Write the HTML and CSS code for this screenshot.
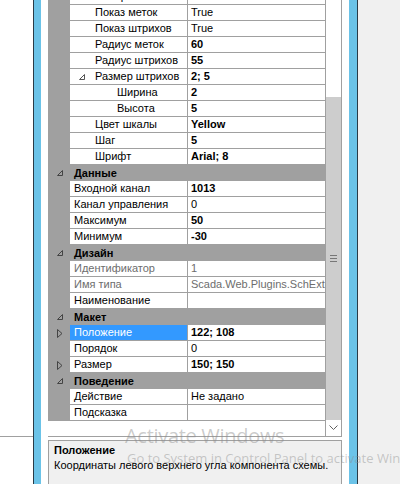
FILE: index.html
```html
<!DOCTYPE html>
<html lang="ru">
<head>
    <meta charset="UTF-8">
    <title>Свойства</title>
    <link rel="stylesheet" href="styles.css">
</head>
<body>
    <div class="backdrop">
        <div class="backdrop-line"></div>
    </div>

    <div class="window">
        <div class="client">
            <div class="grid">
                <div class="rows">
                    <div class="prop-list">
                        <div class="prop">
                            <div class="gutter"></div>
                            <div class="name l2">Поворот меток</div>
                            <div class="value">False</div>
                        </div>
                        <div class="prop">
                            <div class="gutter"></div>
                            <div class="name l2">Показ меток</div>
                            <div class="value">True</div>
                        </div>
                        <div class="prop">
                            <div class="gutter"></div>
                            <div class="name l2">Показ штрихов</div>
                            <div class="value">True</div>
                        </div>
                        <div class="prop">
                            <div class="gutter"></div>
                            <div class="name l2">Радиус меток</div>
                            <div class="value b">60</div>
                        </div>
                        <div class="prop">
                            <div class="gutter"></div>
                            <div class="name l2">Радиус штрихов</div>
                            <div class="value b">55</div>
                        </div>
                        <div class="prop">
                            <div class="gutter"></div>
                            <div class="name l2 has-glyph">
                                <svg class="glyph" width="6" height="6" viewBox="0 0 6 6"><path d="M5.5 0.5V5.5H0.5Z" fill="none" stroke="#555"/></svg>
                                Размер штрихов
                            </div>
                            <div class="value b">2; 5</div>
                        </div>
                        <div class="prop">
                            <div class="gutter"></div>
                            <div class="name l3">Ширина</div>
                            <div class="value b">2</div>
                        </div>
                        <div class="prop">
                            <div class="gutter"></div>
                            <div class="name l3">Высота</div>
                            <div class="value b">5</div>
                        </div>
                        <div class="prop">
                            <div class="gutter"></div>
                            <div class="name l2">Цвет шкалы</div>
                            <div class="value b">Yellow</div>
                        </div>
                        <div class="prop">
                            <div class="gutter"></div>
                            <div class="name l2">Шаг</div>
                            <div class="value b">5</div>
                        </div>
                        <div class="prop">
                            <div class="gutter"></div>
                            <div class="name l2">Шрифт</div>
                            <div class="value b">Arial; 8</div>
                        </div>

                        <div class="cat">
                            <svg class="cat-glyph" width="6" height="6" viewBox="0 0 6 6"><path d="M5.5 0.5V5.5H0.5Z" fill="none" stroke="#444"/></svg>
                            <span>Данные</span>
                        </div>
                        <div class="prop">
                            <div class="gutter"></div>
                            <div class="name">Входной канал</div>
                            <div class="value b">1013</div>
                        </div>
                        <div class="prop">
                            <div class="gutter"></div>
                            <div class="name">Канал управления</div>
                            <div class="value">0</div>
                        </div>
                        <div class="prop">
                            <div class="gutter"></div>
                            <div class="name">Максимум</div>
                            <div class="value b">50</div>
                        </div>
                        <div class="prop">
                            <div class="gutter"></div>
                            <div class="name">Минимум</div>
                            <div class="value b">-30</div>
                        </div>

                        <div class="cat">
                            <svg class="cat-glyph" width="6" height="6" viewBox="0 0 6 6"><path d="M5.5 0.5V5.5H0.5Z" fill="none" stroke="#444"/></svg>
                            <span>Дизайн</span>
                        </div>
                        <div class="prop">
                            <div class="gutter"></div>
                            <div class="name ro">Идентификатор</div>
                            <div class="value ro">1</div>
                        </div>
                        <div class="prop">
                            <div class="gutter"></div>
                            <div class="name ro">Имя типа</div>
                            <div class="value ro">Scada.Web.Plugins.SchExtra.GaugeComponent</div>
                        </div>
                        <div class="prop">
                            <div class="gutter"></div>
                            <div class="name">Наименование</div>
                            <div class="value"></div>
                        </div>

                        <div class="cat">
                            <svg class="cat-glyph" width="6" height="6" viewBox="0 0 6 6"><path d="M5.5 0.5V5.5H0.5Z" fill="none" stroke="#444"/></svg>
                            <span>Макет</span>
                        </div>
                        <div class="prop">
                            <div class="gutter">
                                <svg class="tri" width="6" height="9" viewBox="0 0 6 9"><path d="M0.5 0.5L5 4.5L0.5 8.5Z" fill="none" stroke="#444"/></svg>
                            </div>
                            <div class="name sel">Положение</div>
                            <div class="value b">122; 108</div>
                        </div>
                        <div class="prop">
                            <div class="gutter"></div>
                            <div class="name">Порядок</div>
                            <div class="value">0</div>
                        </div>
                        <div class="prop">
                            <div class="gutter">
                                <svg class="tri" width="6" height="9" viewBox="0 0 6 9"><path d="M0.5 0.5L5 4.5L0.5 8.5Z" fill="none" stroke="#444"/></svg>
                            </div>
                            <div class="name">Размер</div>
                            <div class="value b">150; 150</div>
                        </div>

                        <div class="cat">
                            <svg class="cat-glyph" width="6" height="6" viewBox="0 0 6 6"><path d="M5.5 0.5V5.5H0.5Z" fill="none" stroke="#444"/></svg>
                            <span>Поведение</span>
                        </div>
                        <div class="prop">
                            <div class="gutter"></div>
                            <div class="name">Действие</div>
                            <div class="value">Не задано</div>
                        </div>
                        <div class="prop">
                            <div class="gutter"></div>
                            <div class="name">Подсказка</div>
                            <div class="value"></div>
                        </div>
                    </div>
                </div>

                <div class="scrollbar">
                    <div class="thumb">
                        <span class="grip"></span>
                    </div>
                    <div class="arrow">
                        <svg width="9" height="6" viewBox="0 0 9 6"><path d="M0.5 0.5L4.5 4.5L8.5 0.5" fill="none" stroke="#606060"/></svg>
                    </div>
                </div>
            </div>

            <div class="desc">
                <div class="desc-title">Положение</div>
                <div>Координаты левого верхнего угла компонента схемы.</div>
            </div>
        </div>
    </div>

    <div class="desktop"></div>

    <!-- system watermark drawn over everything -->
    <div class="watermark">
        <div class="wm-title">Activate Windows</div>
        <div class="wm-text">Go to System in Control Panel to activate Windows.</div>
    </div>
</body>
</html>
```

FILE: styles.css
```css
body {
    margin: 0;
    width: 400px;
    height: 484px;
    overflow: hidden;
    position: relative;
    display: flex;
    background: #f0f0f0;
    font-family: "Liberation Sans", Arial, sans-serif;
    font-size: 11px;
    color: #000;
}
.backdrop {
    width: 33px;
    flex: none;
    background: #fff;
    padding-top: 436px;
    box-sizing: border-box;
}
.backdrop-line {
    border-top: 1px solid #a0a0a0;
}
.window {
    width: 325px;
    flex: none;
    box-sizing: border-box;
    display: flex;
    background: #6bc3e8;
    border-left: 1px solid #2a3b47;
    border-right: 1px solid #2a3b47;
    padding: 0 8px 0 7px;
}
.client {
    flex: 1;
    display: flex;
    flex-direction: column;
    background: #fff;
    padding: 0 7px;
    min-width: 0;
}
.desktop {
    flex: 1;
}

/* property grid */
.grid {
    height: 437px;
    flex: none;
    display: flex;
    box-sizing: border-box;
    border-right: 1px solid #a0a0a0;
    border-bottom: 1px solid #a0a0a0;
    overflow: hidden;
}
.rows {
    width: 278px;
    flex: none;
    box-sizing: border-box;
    border-right: 1px solid #a0a0a0;
    overflow: hidden;
    background: #fff;
}
.prop-list {
    margin-top: -11px;
}
.prop {
    display: flex;
    height: 16px;
}
.gutter {
    width: 22px;
    flex: none;
    display: flex;
    align-items: center;
    background: #a0a0a0;
}
.gutter .tri {
    margin-left: 9px;
}
.name {
    width: 117px;
    flex: none;
    box-sizing: border-box;
    display: flex;
    align-items: center;
    padding-left: 4px;
    line-height: 15px;
    white-space: nowrap;
    overflow: hidden;
    border-bottom: 1px solid #a0a0a0;
}
.name.l2 {
    padding-left: 25px;
}
.name.l3 {
    padding-left: 47px;
}
.name.has-glyph {
    padding-left: 9px;
}
.name .glyph {
    margin-right: 10px;
    flex: none;
}
.name.sel {
    background: #3399ff;
    color: #fff;
}
.value {
    flex: 1;
    min-width: 0;
    padding-left: 3px;
    line-height: 15px;
    white-space: nowrap;
    overflow: hidden;
    border-left: 1px solid #a0a0a0;
    border-bottom: 1px solid #a0a0a0;
}
.b {
    font-weight: bold;
}
.ro {
    color: #6d6d6d;
}
.cat {
    display: flex;
    align-items: center;
    height: 16px;
    background: #a0a0a0;
    font-weight: bold;
}
.cat-glyph {
    margin-left: 9px;
    margin-right: 11px;
}

/* vertical scrollbar */
.scrollbar {
    width: 15px;
    flex: none;
    display: flex;
    flex-direction: column;
    background: #fff;
}
.thumb {
    margin-top: 97px;
    height: 323px;
    background: #cdcdcd;
    display: flex;
    align-items: center;
    justify-content: center;
}
.grip {
    width: 7px;
    height: 5px;
    border-top: 1px solid #777;
    border-bottom: 1px solid #777;
    background: linear-gradient(#777, #777) center / 7px 1px no-repeat;
}
.arrow {
    flex: 1;
    display: flex;
    align-items: center;
    justify-content: center;
}

/* help panel */
.desc {
    margin-top: 3px;
    height: 60px;
    flex: none;
    border: 1px solid #a0a0a0;
    background: #f0f0f0;
    padding: 2px 5px;
    line-height: 15px;
}
.desc-title {
    font-weight: bold;
}

.watermark {
    position: absolute;
    left: 125px;
    top: 423px;
    color: rgba(140, 140, 140, 0.45);
    font-family: "Open Sans", sans-serif;
    white-space: nowrap;
}
.wm-title {
    font-size: 20px;
    line-height: 26px;
    letter-spacing: -0.3px;
}
.wm-text {
    font-size: 13px;
    line-height: 15px;
    margin: 2px 0 0 2px;
}
```
